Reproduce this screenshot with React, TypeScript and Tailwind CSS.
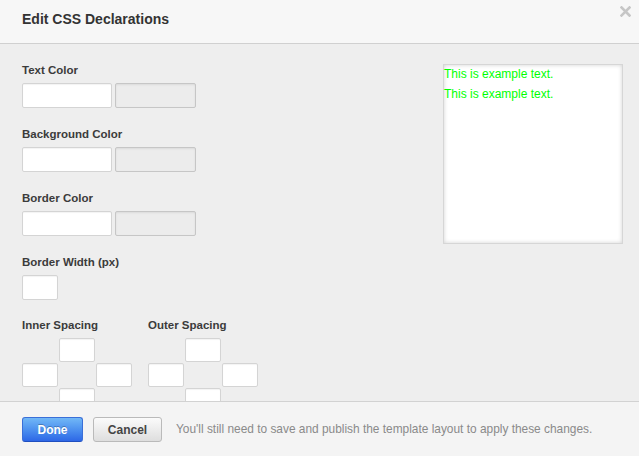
import React from "react";

const font = { fontFamily: '"Liberation Sans", Arial, Helvetica, sans-serif' };

function Label({ children }: { children: React.ReactNode }) {
  return (
    <div className="mb-[5px] text-[11.5px] font-bold leading-4 text-[#3b3b3b]">
      {children}
    </div>
  );
}

function WhiteInput({ className = "h-[25px]" }: { className?: string }) {
  return (
    <div
      className={`rounded-[2px] border border-[#d4d4d4] bg-white shadow-[inset_0_1px_1px_rgba(0,0,0,0.05)] ${className}`}
    />
  );
}

function ColorRow() {
  return (
    <div className="mb-[18px] flex gap-[3px]">
      <WhiteInput className="h-[25px] w-[90px]" />
      <div className="h-[25px] w-[81px] rounded-[2px] border border-[#c6c6c6] bg-[#ececec] shadow-[inset_0_1px_2px_rgba(0,0,0,0.08)]" />
    </div>
  );
}

function SpacingGrid({ title }: { title: string }) {
  return (
    <div>
      <Label>{title}</Label>
      <div className="grid grid-cols-[36px_36px_36px] gap-x-px gap-y-px">
        <div />
        <WhiteInput className="h-[24px]" />
        <div />
        <WhiteInput className="h-[24px]" />
        <div />
        <WhiteInput className="h-[24px]" />
        <div />
        <WhiteInput className="h-[24px]" />
        <div />
      </div>
    </div>
  );
}

export default function App() {
  return (
    <div className="flex h-[456px] w-[639px] flex-col overflow-hidden bg-[#eeeeee]" style={font}>
      {/* header */}
      <div className="relative flex h-[44px] shrink-0 items-center border-b border-[#d0d0d0] bg-[#f7f7f7] px-[22px] pb-[5px]">
        <h1 className="text-[14px] font-bold text-[#333]">Edit CSS Declarations</h1>
        <svg className="absolute right-[8px] top-[6px]" width="11" height="11" viewBox="0 0 11 11">
          <path d="M1.5 1.5 L9.5 9.5 M9.5 1.5 L1.5 9.5" stroke="#c6c6c6" strokeWidth="2.6" strokeLinecap="square" />
        </svg>
      </div>

      {/* body */}
      <div className="flex flex-1 overflow-hidden">
        <div className="pl-[22px] pt-[18px]">
          <Label>Text Color</Label>
          <ColorRow />
          <Label>Background Color</Label>
          <ColorRow />
          <Label>Border Color</Label>
          <ColorRow />
          <Label>Border Width (px)</Label>
          <WhiteInput className="mb-[17px] h-[25px] w-[36px]" />
          <div className="flex gap-[16px]">
            <SpacingGrid title="Inner Spacing" />
            <SpacingGrid title="Outer Spacing" />
          </div>
        </div>
        <div className="ml-auto mr-[16px] mt-[20px]">
          <div className="h-[180px] w-[180px] border border-[#d6d6d6] bg-white shadow-[inset_0_0_4px_rgba(0,0,0,0.18)]">
            <p className="mb-[2px] text-[12px] leading-[18px] text-[#00ff00]">This is example text.</p>
            <p className="text-[12px] leading-[18px] text-[#00ff00]">This is example text.</p>
          </div>
        </div>
      </div>

      {/* footer */}
      <div className="flex h-[55px] shrink-0 items-start border-t border-[#d2d2d2] bg-[#f4f4f4] pl-[22px] pt-[15px]">
        <button className="h-[25px] w-[61px] rounded-[3px] border border-[#3a6fd8] border-b-[#1f4fc0] bg-gradient-to-b from-[#72b8f6] to-[#2e67e6] text-[12px] font-bold text-white [text-shadow:0_-1px_0_rgba(0,0,0,0.25)]">
          Done
        </button>
        <button className="ml-[10px] h-[25px] w-[69px] rounded-[3px] border border-[#bababa] bg-gradient-to-b from-[#fbfbfb] to-[#dedede] text-[12px] font-bold text-[#444]">
          Cancel
        </button>
        <span className="ml-[14px] text-[11.9px] leading-[25px] text-[#8a8a8a]">
          You'll still need to save and publish the template layout to apply these changes.
        </span>
      </div>
    </div>
  );
}
